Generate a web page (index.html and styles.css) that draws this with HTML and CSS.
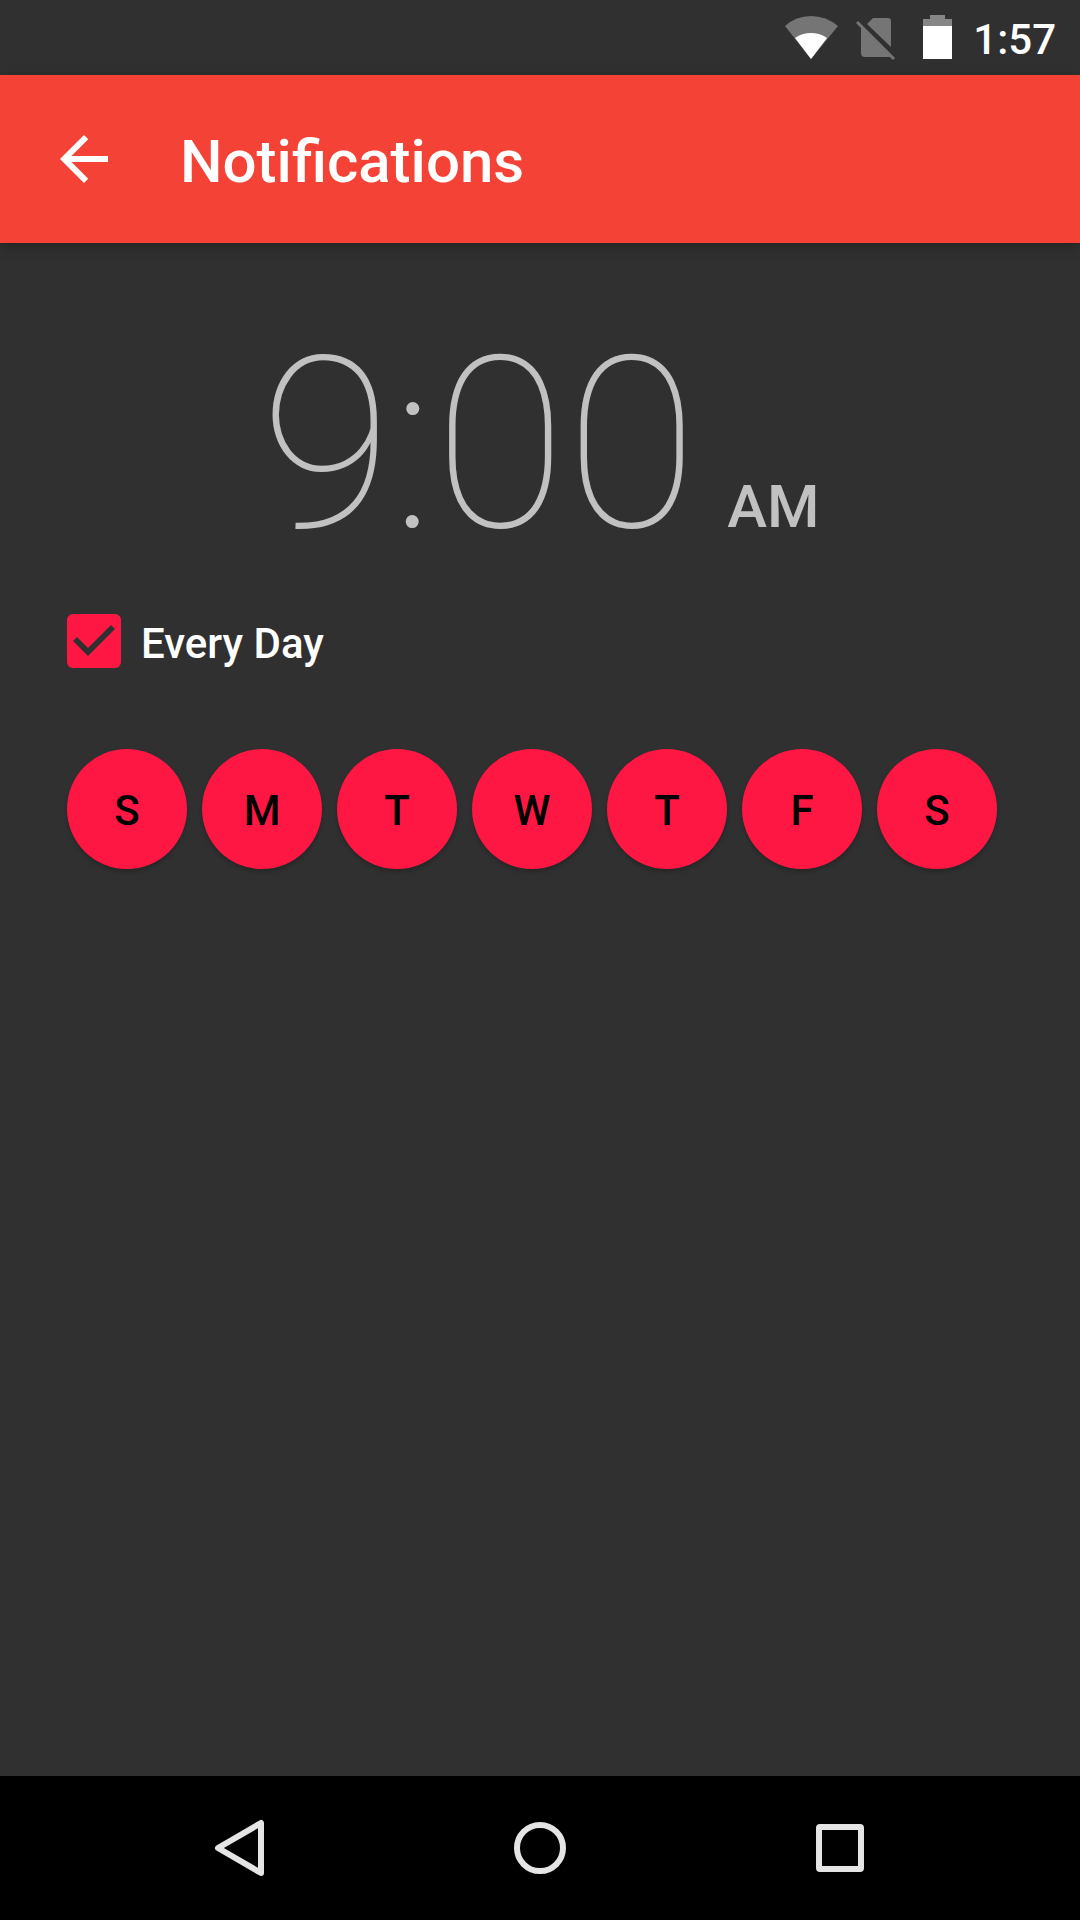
FILE: index.html
```html
<!DOCTYPE html>
<html lang="en">
<head>
  <meta charset="UTF-8">
  <meta name="viewport" content="width=device-width, initial-scale=1">
  <title>Notifications</title>
  <link rel="stylesheet" href="styles.css">
</head>
<body>

  <div class="status-bar">
    <svg width="54" height="75" viewBox="0 0 54 75" aria-hidden="true">
      <path fill="#757575" d="M27 59L1 26Q12 16 27 16T54 26z"/>
      <path fill="#fff" d="M27 59L11 38Q18 33 27 33T43 38z"/>
    </svg>
    <svg width="40" height="75" viewBox="0 0 40 75" aria-hidden="true">
      <path fill="#757575" d="M11 24L17 18H32Q35 18 35 21V47zM5 27L35 57H9Q5 57 5 53z"/>
      <path stroke="#757575" stroke-width="3" d="M1 22L38 59"/>
    </svg>
    <svg width="41" height="75" viewBox="0 0 41 75" aria-hidden="true">
      <path fill="#868686" d="M9 26V19H16V15H31V19H38V26z"/>
      <path fill="#fff" d="M9 26H38V59H9z"/>
    </svg>
    <span class="clock">1:57</span>
  </div>

  <header class="toolbar">
    <button class="back" aria-label="Back">
      <svg width="72" height="72" viewBox="0 0 24 24">
        <path fill="#fff" d="M20 11H7.83l5.59-5.59L12 4l-8 8 8 8 1.41-1.41L7.83 13H20v-2z"/>
      </svg>
    </button>
    <h1>Notifications</h1>
  </header>

  <main>
    <button class="time">
      <span class="digits">9:00</span>
      <span class="ampm">AM</span>
    </button>

    <div class="every-day">
      <input type="checkbox" id="everyDay" checked>
      <label for="everyDay">Every Day</label>
    </div>

    <div class="days">
      <button aria-label="Sunday">S</button>
      <button aria-label="Monday">M</button>
      <button aria-label="Tuesday">T</button>
      <button aria-label="Wednesday">W</button>
      <button aria-label="Thursday">T</button>
      <button aria-label="Friday">F</button>
      <button aria-label="Saturday">S</button>
    </div>
  </main>

  <nav class="nav-bar">
    <button aria-label="Back">
      <svg width="72" height="72" viewBox="0 0 72 72">
        <path d="M57 11V61L14 36z"/>
      </svg>
    </button>
    <button aria-label="Home">
      <svg width="72" height="72" viewBox="0 0 72 72">
        <circle cx="36" cy="36" r="23"/>
      </svg>
    </button>
    <button aria-label="Recent apps">
      <svg width="72" height="72" viewBox="0 0 72 72">
        <rect x="15" y="15" width="42" height="42" rx="1"/>
      </svg>
    </button>
  </nav>

</body>
</html>
```

FILE: styles.css
```css
* {
  box-sizing: border-box;
}
body {
  margin: 0;
  min-height: 100vh;
  display: flex;
  flex-direction: column;
  background: #303030;
  color: white;
  font-family: Roboto, sans-serif;
  font-size: 42px;
  font-weight: 500;
}
button {
  padding: 0;
  border: none;
  background: none;
  color: inherit;
  font: inherit;
  cursor: pointer;
}
svg {
  display: block;
}

.status-bar {
  height: 75px;
  display: flex;
  justify-content: flex-end;
  align-items: center;
  gap: 18px;
  padding-right: 24px;
}
.clock {
  padding-top: 4px;
}

.toolbar {
  height: 168px;
  display: flex;
  align-items: center;
  gap: 60px;
  padding: 0 48px;
  background: #f44336;
  box-shadow: 0 4px 12px rgba(0, 0, 0, 0.25);
}
.toolbar h1 {
  margin: 0;
  padding-top: 4px;
  font-size: 60px;
  font-weight: 500;
}

main {
  flex: 1;
  padding: 82px 67px 0;
  display: flex;
  flex-direction: column;
  align-items: flex-start;
}
.time {
  align-self: center;
  display: flex;
  align-items: baseline;
  gap: 30px;
  color: #c1c1c1;
}
.digits {
  font-size: 240px;
  font-weight: 100;
  line-height: 240px;
}
.ampm {
  font-size: 60px;
}

.every-day {
  display: flex;
  align-items: center;
  gap: 20px;
  height: 54px;
  margin: 49px 0 81px;
}
.every-day label {
  padding-top: 4px;
}
.every-day input {
  appearance: none;
  width: 54px;
  height: 54px;
  margin: 0;
  border-radius: 6px;
  border: 6px solid #c1c1c1;
}
.every-day input:checked {
  border: none;
  background: #ff1744;
}
.every-day input:checked::before {
  content: "";
  display: block;
  height: 54px;
  background: #303030;
  clip-path: polygon(6px 27px, 10px 23px, 21px 34px, 44px 11px, 48px 15px, 21px 42px);
}

.days {
  display: flex;
  gap: 15px;
}
.days button {
  width: 120px;
  height: 120px;
  padding-top: 3px;
  border-radius: 50%;
  background: #ff1744;
  color: black;
  box-shadow: 0 3px 4px rgba(0, 0, 0, 0.2);
}

.nav-bar {
  height: 144px;
  display: flex;
  justify-content: center;
  background: black;
}
.nav-bar button {
  width: 300px;
  display: flex;
  justify-content: center;
  align-items: center;
}
.nav-bar svg {
  fill: none;
  stroke: #e5e5e5;
  stroke-width: 6;
  stroke-linejoin: round;
}
```
